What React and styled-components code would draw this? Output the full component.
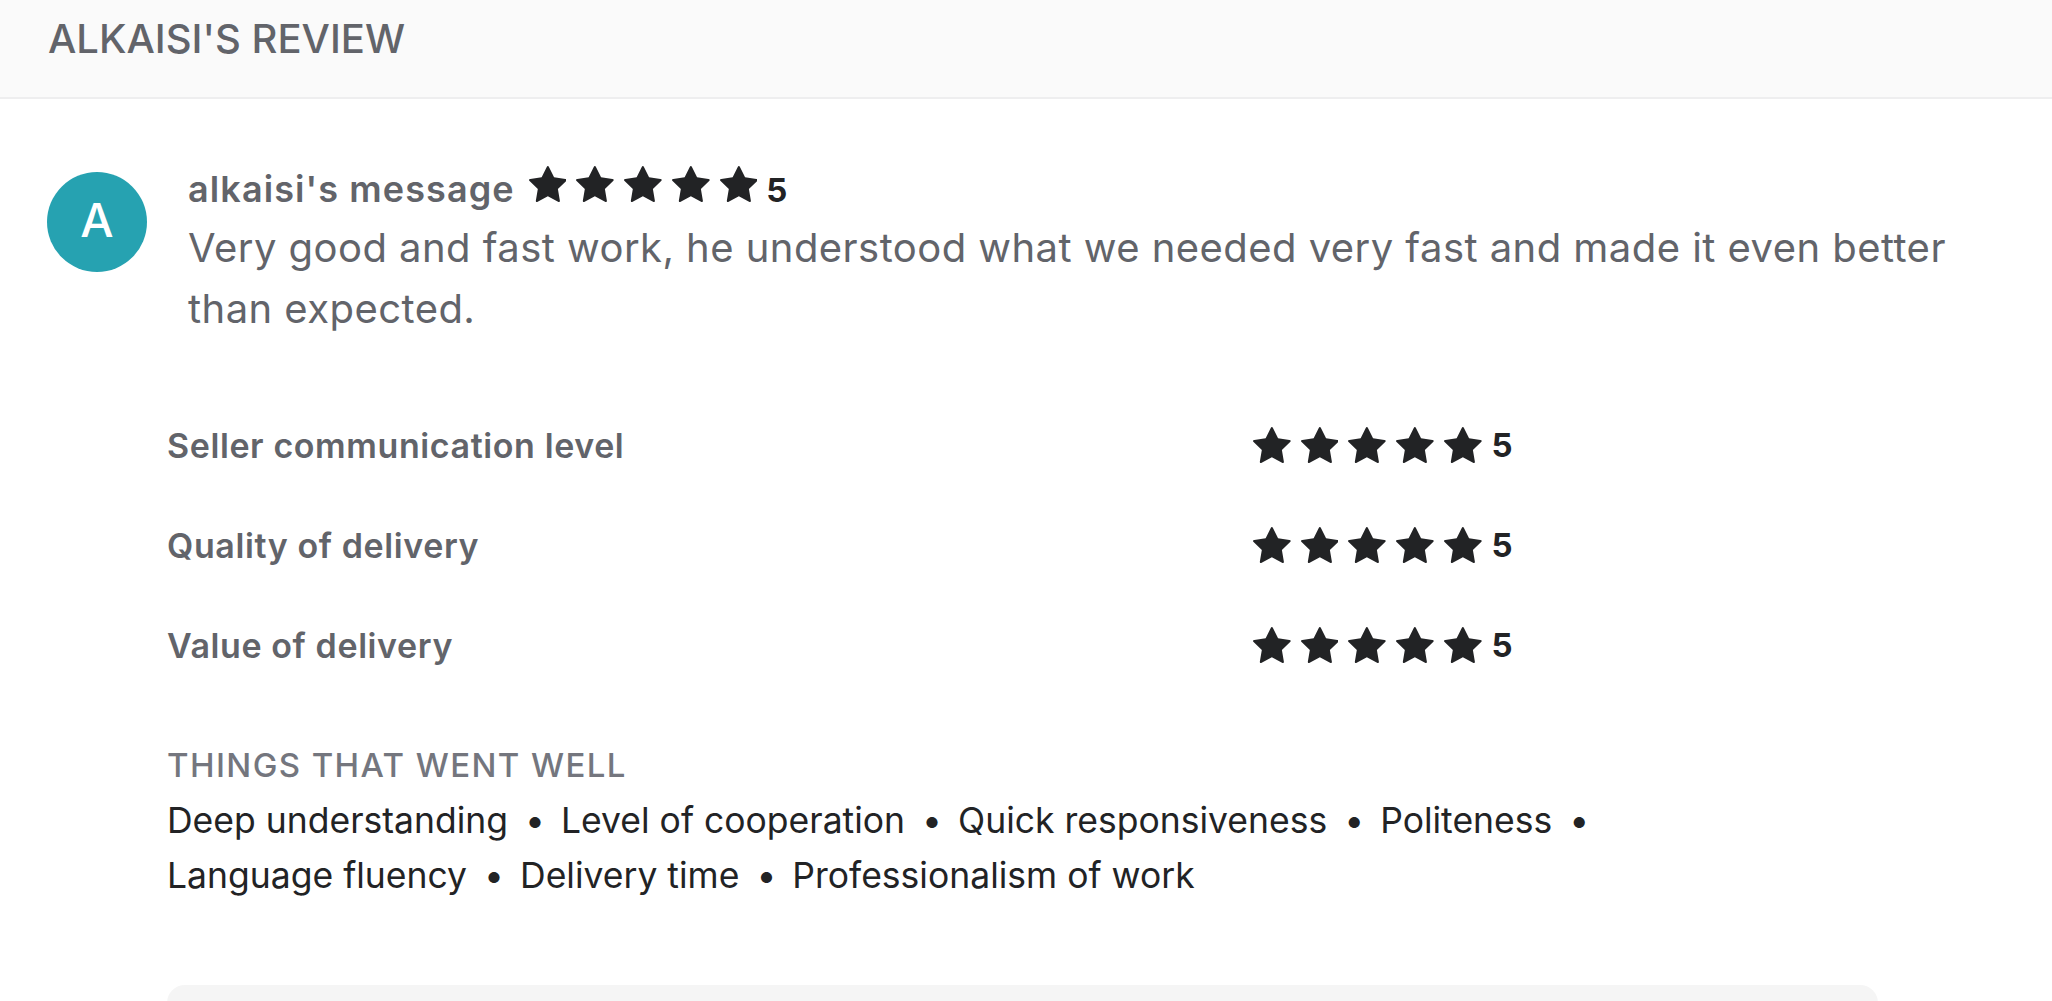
import React from "react";
import styled, { createGlobalStyle } from "styled-components";

const GlobalStyle = createGlobalStyle`
  html, body {
    margin: 0;
    padding: 0;
    background: #ffffff;
    overflow: hidden;
  }
  body {
    font-family: Inter, "Liberation Sans", Arial, sans-serif;
    -webkit-font-smoothing: antialiased;
  }
  * { box-sizing: border-box; }
`;

const Page = styled.div`
  width: 100%;
  min-height: 100vh;
  background: #fff;
`;

const Header = styled.header`
  height: 99px;
  background: #fafafa;
  border-bottom: 2px solid #eeeeef;
  display: flex;
  align-items: flex-start;
  padding: 15px 0 0 48px;
`;

const HeaderTitle = styled.h2`
  margin: 0;
  font-size: 40px;
  line-height: 48px;
  font-weight: 500;
  color: #62646a;
  text-transform: uppercase;
`;

const Content = styled.main`
  padding: 67px 48px 0 47px;
`;

const ReviewRow = styled.div`
  display: flex;
  align-items: flex-start;
  gap: 41px;
`;

const Avatar = styled.div`
  flex: none;
  width: 100px;
  height: 100px;
  margin-top: 6px;
  padding-bottom: 5px;
  border-radius: 50%;
  background: #26a2b1;
  color: #fff;
  display: flex;
  align-items: center;
  justify-content: center;
  font-size: 47px;
  font-weight: 500;
`;

const ReviewBody = styled.div`
  flex: 1;
  min-width: 0;
`;

const NameLine = styled.div`
  display: flex;
  align-items: baseline;
`;

const Name = styled.span`
  font-size: 36px;
  line-height: 44px;
  font-weight: 600;
  letter-spacing: 1.1px;
  color: #62646a;
  margin-right: 14px;
`;

const StarRow = styled.span`
  display: inline-flex;
  align-items: flex-end;
  gap: ${(p) => p.$gap}px;
`;

const StarIcon = styled.svg`
  display: block;
  width: ${(p) => p.$size * 1.048}px;
  height: ${(p) => p.$size}px;
  fill: #222325;
`;

const Score = styled.span`
  font-size: 33px;
  line-height: 44px;
  font-weight: 700;
  color: #222325;
  margin-left: ${(p) => p.$offset}px;
`;

const Message = styled.p`
  margin: 5px 0 0;
  font-size: 40px;
  line-height: 61px;
  font-weight: 400;
  letter-spacing: 0.45px;
  color: #62646a;
`;

const Details = styled.section`
  margin: 56px 0 0 120px;
  width: 1711px;
`;

const RatingList = styled.div`
  display: flex;
  flex-direction: column;
`;

const RatingRow = styled.div`
  height: 100px;
  display: grid;
  grid-template-columns: 1086px auto;
  align-items: center;
`;

const RatingLabel = styled.span`
  font-size: 34px;
  font-weight: 600;
  letter-spacing: 0.6px;
  color: #62646a;
`;

const RatingValue = styled.span`
  display: flex;
  align-items: center;
`;

const WentWell = styled.div`
  margin-top: 50px;
`;

const WentWellTitle = styled.h3`
  margin: 0;
  font-size: 33px;
  line-height: 40px;
  font-weight: 500;
  letter-spacing: 1.4px;
  color: #74767e;
  text-transform: uppercase;
`;

const TagList = styled.ul`
  list-style: none;
  margin: 8px 0 0;
  padding: 0;
  display: flex;
  flex-wrap: wrap;
`;

const Tag = styled.li`
  font-size: 35.5px;
  line-height: 55px;
  color: #222325;
  white-space: nowrap;

  &:not(:last-child)::after {
    content: "•";
    display: inline-block;
    margin: 0 16px 0 17px;
  }
`;

const ReplyBox = styled.div`
  margin-top: 82px;
  height: 160px;
  border-radius: 18px;
  background: #f5f5f5;
`;

const STAR_PATH =
  "M1728 647q0 22-26 48l-363 354 86 500q1 7 1 20 0 21-10.5 35.5t-30.5 14.5q-19 0-40-12l-449-236-449 236q-22 12-40 12-21 0-31.5-14.5t-10.5-35.5q0-6 2-20l86-500-364-354q-25-27-25-48 0-37 56-46l502-73 225-455q19-41 49-41t49 41l225 455 502 73q56 9 56 46z";

function Stars({ size = 36, gap = 10 }) {
  return (
    <StarRow $gap={gap}>
      {[0, 1, 2, 3, 4].map((i) => (
        <StarIcon key={i} $size={size} viewBox="64 32 1664 1587" aria-hidden="true">
          <path d={STAR_PATH} />
        </StarIcon>
      ))}
    </StarRow>
  );
}

const ratings = [
  { label: "Seller communication level", value: 5 },
  { label: "Quality of delivery", value: 5 },
  { label: "Value of delivery", value: 5 },
];

const tags = [
  "Deep understanding",
  "Level of cooperation",
  "Quick responsiveness",
  "Politeness",
  "Language fluency",
  "Delivery time",
  "Professionalism of work",
];

export default function App() {
  return (
    <Page>
      <GlobalStyle />
      <Header>
        <HeaderTitle>ALKAISI'S REVIEW</HeaderTitle>
      </Header>
      <Content>
        <ReviewRow>
          <Avatar>A</Avatar>
          <ReviewBody>
            <NameLine>
              <Name>alkaisi's message</Name>
              <Stars size={36} gap={10} />
              <Score $offset={9}>5</Score>
            </NameLine>
            <Message>
              Very good and fast work, he understood what we needed very fast and made it even better than expected.
            </Message>
          </ReviewBody>
        </ReviewRow>
        <Details>
          <RatingList>
            {ratings.map((r) => (
              <RatingRow key={r.label}>
                <RatingLabel>{r.label}</RatingLabel>
                <RatingValue>
                  <Stars size={36} gap={10} />
                  <Score $offset={10}>{r.value}</Score>
                </RatingValue>
              </RatingRow>
            ))}
          </RatingList>
          <WentWell>
            <WentWellTitle>Things that went well</WentWellTitle>
            <TagList>
              {tags.map((t) => (
                <Tag key={t}>{t}</Tag>
              ))}
            </TagList>
          </WentWell>
          <ReplyBox />
        </Details>
      </Content>
    </Page>
  );
}
